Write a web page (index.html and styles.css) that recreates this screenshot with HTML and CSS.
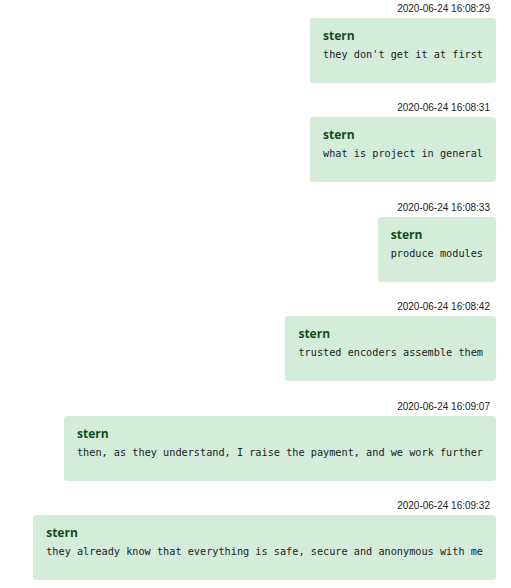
FILE: index.html
```html
<!DOCTYPE html>
<html>
<head>
<meta charset="utf-8">
<link rel="stylesheet" href="styles.css">
</head>
<body>
<div class="chat">
  <div class="msg">
    <div class="time">2020-06-24 16:08:29</div>
    <div class="bubble"><div class="name">stern</div><p class="text">they don't get it at first</p></div>
  </div>
  <div class="msg">
    <div class="time">2020-06-24 16:08:31</div>
    <div class="bubble"><div class="name">stern</div><p class="text">what is project in general</p></div>
  </div>
  <div class="msg">
    <div class="time">2020-06-24 16:08:33</div>
    <div class="bubble"><div class="name">stern</div><p class="text">produce modules</p></div>
  </div>
  <div class="msg">
    <div class="time">2020-06-24 16:08:42</div>
    <div class="bubble"><div class="name">stern</div><p class="text">trusted encoders assemble them</p></div>
  </div>
  <div class="msg">
    <div class="time">2020-06-24 16:09:07</div>
    <div class="bubble"><div class="name">stern</div><p class="text">then, as they understand, I raise the payment, and we work further</p></div>
  </div>
  <div class="msg">
    <div class="time">2020-06-24 16:09:32</div>
    <div class="bubble"><div class="name">stern</div><p class="text">they already know that everything is safe, secure and anonymous with me</p></div>
  </div>
</div>
</body>
</html>
```
FILE: styles.css
```css
html, body {
  margin: 0;
  padding: 0;
  background: #ffffff;
}
.chat {
  display: flex;
  flex-direction: column;
  align-items: flex-end;
  gap: 18.4px;
  padding: 2px 15px 0 0;
}
.msg {
  display: flex;
  flex-direction: column;
  align-items: flex-end;
}
.time {
  font-family: "Liberation Sans", Arial, sans-serif;
  font-size: 10px;
  line-height: 14px;
  color: #222;
  padding-right: 6px;
  margin-bottom: 2px;
}
.bubble {
  background: #d4edda;
  border-radius: 3px;
  padding: 10px 13px 20px 13px;
}
.name {
  font-family: "Open Sans", "Noto Sans", sans-serif;
  font-weight: 700;
  font-size: 12px;
  line-height: 16px;
  color: #0f4d1a;
}
.text {
  margin: 3px 0 0 0;
  font-family: "DejaVu Sans Mono", "Liberation Mono", monospace;
  font-size: 10.23px;
  line-height: 16px;
  color: #222;
  white-space: pre;
}
```
